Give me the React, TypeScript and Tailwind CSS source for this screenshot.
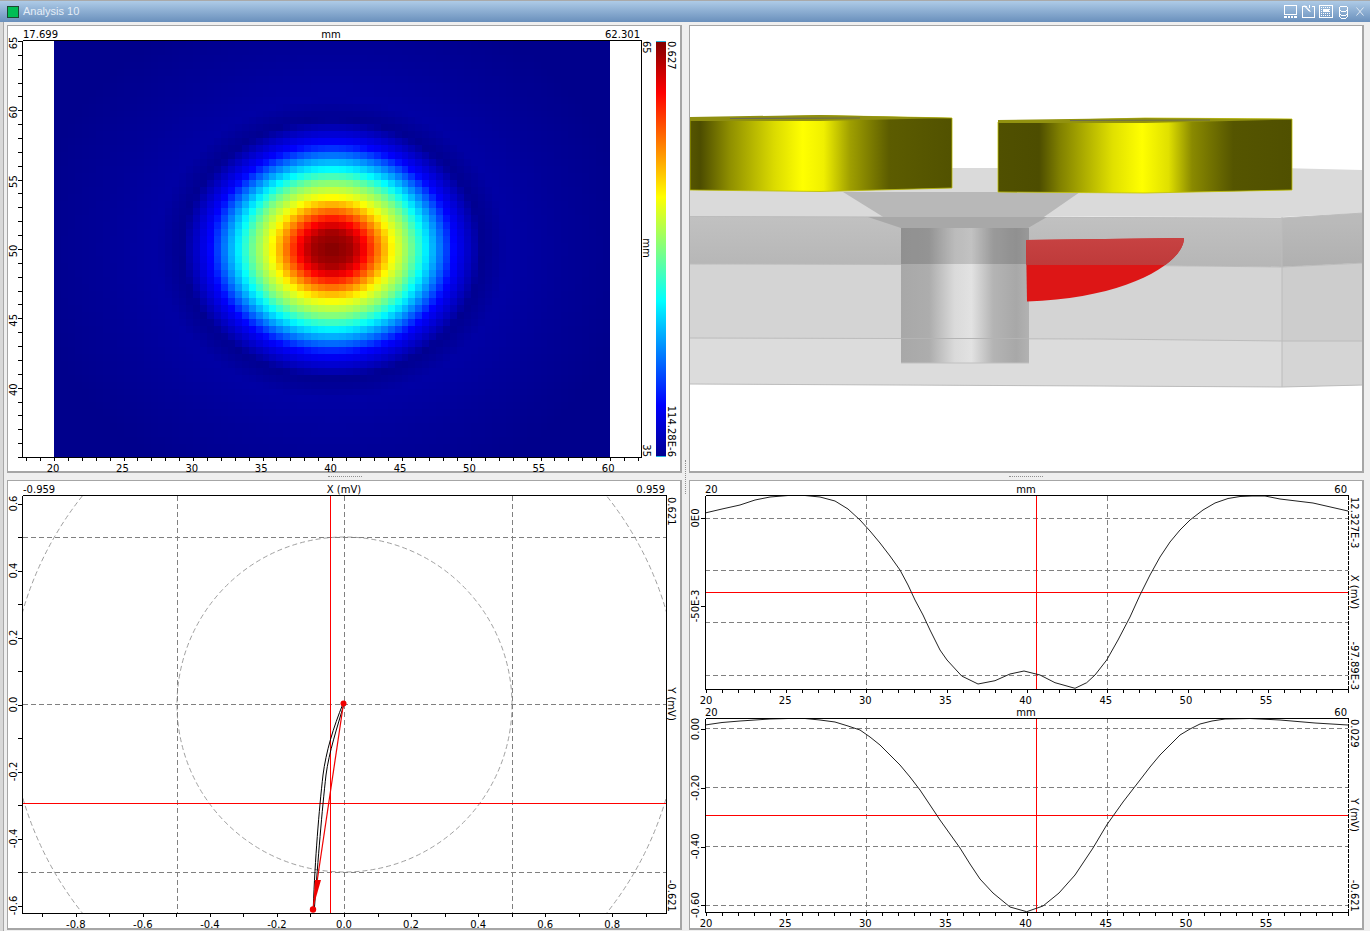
import { useMemo } from "react"

const range = (from: number, to: number, step: number) => {
  const out: number[] = []
  for (let v = from; v <= to + step / 1000; v += step) out.push(v)
  return out
}

const stops: [number, number[]][] = [
  [0, [128, 0, 0]],
  [20, [165, 0, 0]],
  [33, [255, 0, 0]],
  [60, [255, 255, 0]],
  [78, [128, 255, 128]],
  [92, [0, 255, 255]],
  [122, [0, 0, 255]],
  [150, [0, 0, 144]],
  [175, [0, 0, 165]],
  [230, [0, 0, 152]],
  [300, [0, 0, 140]],
  [1000, [0, 0, 140]],
]

function jet(d: number) {
  for (let i = 1; i < stops.length; i++) {
    if (d <= stops[i][0]) {
      const [d0, c0] = stops[i - 1]
      const [d1, c1] = stops[i]
      const t = (d - d0) / (d1 - d0)
      const c = c0.map((v, k) => Math.round(v + (c1[k] - v) * t))
      return `rgb(${c[0]},${c[1]},${c[2]})`
    }
  }
  return "rgb(0,0,140)"
}

function Heatmap() {
  const cells = useMemo(() => {
    const out: { x: number; y: number; fill: string }[] = []
    const size = 6.95
    for (let i = 0; i < 80; i++) {
      for (let j = 0; j < 60; j++) {
        const x = 54 + i * size
        const y = 41 + j * size
        const dx = x + size / 2 - 332
        const dy = (y + size / 2 - 249) * 1.16
        out.push({ x, y, fill: jet(Math.sqrt(dx * dx + dy * dy)) })
      }
    }
    return out
  }, [])
  return (
    <g shapeRendering="crispEdges">
      {cells.map((c) => (
        <rect key={`${c.x}-${c.y}`} x={c.x} y={c.y} width={7.3} height={7.3} fill={c.fill} />
      ))}
    </g>
  )
}

function Label({ x, y, children, anchor = "start" }: { x: number; y: number; children: string; anchor?: "start" | "middle" | "end" }) {
  return (
    <text x={x} y={y} textAnchor={anchor} fill="#000">
      {children}
    </text>
  )
}

// rotated axis text, dir -90 reads upwards and 90 reads downwards
function VLabel({ x, y, dir, children, anchor = "middle" }: { x: number; y: number; dir: number; children: string; anchor?: "start" | "middle" | "end" }) {
  return (
    <text transform={`translate(${x} ${y}) rotate(${dir})`} textAnchor={anchor} fill="#000">
      {children}
    </text>
  )
}

function Box({ x0, y0, x1, y1, dashedRight }: { x0: number; y0: number; x1: number; y1: number; dashedRight?: boolean }) {
  return (
    <g shapeRendering="crispEdges" stroke="#000" fill="none">
      <path d={`M${x0} ${y0}H${x1}M${x0} ${y0}V${y1}H${x1}`} />
      <path d={`M${x1} ${y0}V${y1}`} strokeDasharray={dashedRight ? "4 1" : undefined} />
    </g>
  )
}

function TicksX({ xs, y }: { xs: number[]; y: number }) {
  return <path shapeRendering="crispEdges" stroke="#000" d={xs.map((x) => `M${Math.round(x) + 0.5} ${y}v4`).join("")} />
}

function TicksY({ ys, x }: { ys: number[]; x: number }) {
  return <path shapeRendering="crispEdges" stroke="#000" d={ys.map((y) => `M${x} ${Math.round(y) + 0.5}h-4`).join("")} />
}

function Dashed({ d }: { d: string }) {
  return <path shapeRendering="crispEdges" d={d} stroke="#808080" strokeDasharray="5 3" fill="none" />
}

function Cross({ x0, y0, x1, y1, cx, cy }: { x0: number; y0: number; x1: number; y1: number; cx: number; cy: number }) {
  return <path shapeRendering="crispEdges" d={`M${cx} ${y0}V${y1}M${x0} ${cy}H${x1}`} stroke="#ff0000" fill="none" />
}

function MapPanel() {
  const xMinor = range(18, 62, 1).map((v) => 54 + (v - 20) * 13.9)
  const yMinor = range(35, 65, 1).map((v) => 457 - (v - 35) * 13.87)
  return (
    <svg viewBox="8 26 672 445" className="block h-full w-full overflow-visible">
      <Heatmap />
      <defs>
        <linearGradient id="jetbar" x1="0" y1="0" x2="0" y2="1">
          <stop offset="0" stopColor="#800000" />
          <stop offset="0.125" stopColor="#ff0000" />
          <stop offset="0.375" stopColor="#ffff00" />
          <stop offset="0.5" stopColor="#80ff80" />
          <stop offset="0.625" stopColor="#00ffff" />
          <stop offset="0.875" stopColor="#0000ff" />
          <stop offset="1" stopColor="#000090" />
        </linearGradient>
      </defs>
      <rect x="656" y="41" width="10" height="416" fill="url(#jetbar)" />
      <path shapeRendering="crispEdges" d="M656 41.5h10M656 456.5h10" stroke="#29b6e0" />
      <Box x0={22.5} y0={40.5} x1={641.5} y1={457.5} />
      <TicksX xs={xMinor} y={457} />
      <TicksY ys={yMinor} x={22} />
      <Label x={23} y={38}>17.699</Label>
      <Label x={331} y={38} anchor="middle">mm</Label>
      <Label x={640} y={38} anchor="end">62.301</Label>
      {[20, 25, 30, 35, 40, 45, 50, 55, 60].map((v) => (
        <Label key={v} x={54 + (v - 20) * 13.88 - 1} y={471.5} anchor="middle">{String(v)}</Label>
      ))}
      {[65, 60, 55, 50, 45, 40].map((v) => (
        <VLabel key={v} x={17} y={457 - (v - 35) * 13.87 + 2} dir={-90}>{String(v)}</VLabel>
      ))}
      <VLabel x={643} y={41} dir={90} anchor="start">65</VLabel>
      <VLabel x={643} y={248} dir={90}>mm</VLabel>
      <VLabel x={643} y={457} dir={90} anchor="end">35</VLabel>
      <VLabel x={668} y={41} dir={90} anchor="start">0.627</VLabel>
      <VLabel x={668} y={457} dir={90} anchor="end">114.28E-6</VLabel>
    </svg>
  )
}

function ScenePanel() {
  return (
    <svg viewBox="690 26 672 445" className="block h-full w-full">
      <defs>
        <linearGradient id="magnetL" gradientUnits="userSpaceOnUse" x1="690" y1="0" x2="952" y2="0">
          <stop offset="0" stopColor="#565600" />
          <stop offset="0.04" stopColor="#4d4d00" />
          <stop offset="0.15" stopColor="#8e8e00" />
          <stop offset="0.32" stopColor="#dada00" />
          <stop offset="0.43" stopColor="#ffff00" />
          <stop offset="0.51" stopColor="#f0f000" />
          <stop offset="0.61" stopColor="#a0a000" />
          <stop offset="0.76" stopColor="#5c5c00" />
          <stop offset="1" stopColor="#525200" />
        </linearGradient>
        <linearGradient id="magnetR" gradientUnits="userSpaceOnUse" x1="998" y1="0" x2="1292" y2="0">
          <stop offset="0" stopColor="#505000" />
          <stop offset="0.14" stopColor="#4d4d00" />
          <stop offset="0.21" stopColor="#808000" />
          <stop offset="0.39" stopColor="#e0e000" />
          <stop offset="0.49" stopColor="#ffff00" />
          <stop offset="0.58" stopColor="#e0e000" />
          <stop offset="0.66" stopColor="#8a8a00" />
          <stop offset="0.8" stopColor="#555500" />
          <stop offset="1" stopColor="#505000" />
        </linearGradient>
        <linearGradient id="pin" gradientUnits="userSpaceOnUse" x1="901" y1="0" x2="1029" y2="0">
          <stop offset="0" stopColor="#a8a8a8" />
          <stop offset="0.22" stopColor="#adadad" />
          <stop offset="0.42" stopColor="#dadada" />
          <stop offset="0.55" stopColor="#e2e2e2" />
          <stop offset="0.72" stopColor="#b4b4b4" />
          <stop offset="0.9" stopColor="#a8a8a8" />
          <stop offset="1" stopColor="#b2b2b2" />
        </linearGradient>
        <linearGradient id="band" x1="0" y1="0" x2="0" y2="1">
          <stop offset="0" stopColor="#c2c2c2" />
          <stop offset="1" stopColor="#b6b6b6" />
        </linearGradient>
        <linearGradient id="redTop" x1="0" y1="0" x2="0" y2="1">
          <stop offset="0" stopColor="#c74242" />
          <stop offset="1" stopColor="#b33030" />
        </linearGradient>
        <clipPath id="bandClip">
          <rect x="1000" y="230" width="220" height="35" />
        </clipPath>
      </defs>

      {/* plate */}
      <path d="M690 190H843L952 168H1280L1364 170V213L1282 217L690 216Z" fill="#dadada" />
      <path d="M690 216L1100 217L1282 218L1364 213V263L1282 267L1100 265L690 264Z" fill="url(#band)" />
      <path d="M690 264L1100 265L1282 267L1364 263V385L1282 387L1100 386L690 384Z" fill="#d4d4d4" />
      <path d="M690 338L1100 339L1282 341L1364 341V385L1282 387L1100 386L690 384Z" fill="#dcdcdc" />
      <path d="M1282 217L1364 213V385L1282 387Z" fill="#000" fillOpacity="0.03" />
      <path d="M690 216.5L1282 218L1364 213M690 264L1100 265L1282 267L1364 263M690 338L1100 339L1282 341L1364 341M690 384L1100 386L1282 387L1364 385M1282 217V387" stroke="#bcbcbc" fill="none" />

      {/* countersink + pin */}
      <path d="M843 192H1080L1028 228H901Z" fill="#b8b8b8" />
      <path d="M868 217H1047L1028 228H901Z" fill="#a8a8a8" />
      <rect x="901" y="228" width="128" height="135" fill="url(#pin)" />
      <rect x="901" y="228" width="128" height="36" fill="#000" fillOpacity="0.14" />
      <path d="M901 338.5H1029" stroke="#b4b4b4" />
      <path d="M901 363H1029" stroke="#c0c0c0" />

      {/* red patch */}
      <path d="M1026 240L1184 238C1184 262 1130 298 1027 301.5Z" fill="#dd1616" />
      <path d="M1026 240L1184 238C1184 262 1130 298 1027 301.5Z" fill="url(#redTop)" clipPath="url(#bandClip)" />

      {/* magnets */}
      <path d="M690 119L820 115.5L952 118V188L820 191.5L690 190Z" fill="url(#magnetL)" stroke="#b9b900" strokeWidth="0.8" />
      <path d="M690 117L820 115L952 118L820 121L690 121Z" fill="#8f8f10" />
      <path d="M730 118.5L860 118" stroke="#6b6b50" strokeWidth="1.2" />
      <path d="M998 122L1145 118L1292 119V190L1145 193L998 192Z" fill="url(#magnetR)" stroke="#c2c200" strokeWidth="0.8" />
      <path d="M998 120L1145 118L1292 119.5L1145 123L998 123Z" fill="#92920f" />
      <path d="M1070 120.5L1210 120" stroke="#6b6b50" strokeWidth="1.2" />
    </svg>
  )
}

function PolarPanel() {
  const xTicks = range(-0.9, 0.9, 0.1).map((v) => 344 + v * 335.2)
  const yTicks = range(-0.6, 0.6, 0.1).map((v) => 704.5 - v * 335)
  return (
    <svg viewBox="8 481 672 447" className="block h-full w-full overflow-visible">
      <defs>
        <clipPath id="polarClip">
          <rect x="23" y="496" width="643" height="417" />
        </clipPath>
      </defs>
      <g clipPath="url(#polarClip)" fill="none" stroke="#a0a0a0" strokeDasharray="5 3">
        <circle cx="344.5" cy="704.5" r="167.5" />
        <circle cx="344.5" cy="704.5" r="335" />
      </g>
      <Dashed d="M177.5 496V913M344.5 496V913M512.5 496V913M23 537.5H666M23 704.5H666M23 872.5H666" />
      <Cross x0={23} y0={496} x1={666} y1={913} cx={330.5} cy={803.5} />
      <path d="M343.3 703C333 728 326 752 323 775C319 810 315 860 313.3 907" fill="none" stroke="#000" />
      <path d="M344 704C337 728 329 752 326 775C322 810 318 860 314.5 907" fill="none" stroke="#000" />
      <path d="M343.5 703.5L313 909" stroke="#f00000" strokeWidth="1.2" />
      <path d="M315 880L321 880L313 908Z" fill="#f00000" />
      <circle cx="343.5" cy="703.5" r="3" fill="#f00000" />
      <circle cx="313" cy="909.5" r="3.2" fill="#f00000" />
      <Box x0={22.5} y0={495.5} x1={666.5} y1={913.5} />
      <TicksX xs={xTicks} y={913} />
      <TicksY ys={yTicks} x={22} />
      <Label x={23} y={493}>-0.959</Label>
      <Label x={344} y={493} anchor="middle">X (mV)</Label>
      <Label x={665} y={493} anchor="end">0.959</Label>
      {[-0.8, -0.6, -0.4, -0.2, 0, 0.2, 0.4, 0.6, 0.8].map((v) => (
        <Label key={v} x={344 + v * 335.2} y={928} anchor="middle">{v.toFixed(1)}</Label>
      ))}
      {[0.6, 0.4, 0.2, 0, -0.2, -0.4, -0.6].map((v) => (
        <VLabel key={v} x={17} y={704.5 - v * 335} dir={-90}>{v.toFixed(1)}</VLabel>
      ))}
      <VLabel x={668} y={497} dir={90} anchor="start">0.621</VLabel>
      <VLabel x={668} y={704} dir={90}>Y (mV)</VLabel>
      <VLabel x={668} y={912} dir={90} anchor="end">-0.621</VLabel>
    </svg>
  )
}

const curveX =
  "M705 513L722 509L740 505L755 500L770 497L788 495.5L805 495.5L820 497L835 501L848 509L860 520L870 531L880 543L890 556L900 570L908 585L915 600L923 615L930 630L940 650L947 660L961.7 676L978 684L995 680.7L1010 674L1024 671L1040 675L1055 682.7L1075 688.3L1086.7 682.7L1095 675L1106.7 660L1118 640L1130 617L1140 595L1150 575L1160 557L1170 542L1180 530L1190 520L1203 510L1215 503L1228 498.5L1240 496.5L1252 496L1265 496L1280 499L1313 503L1348 511"

const curveY =
  "M705 725L722 722.5L740 721L755 720L770 719L788 718.5L805 718.5L820 720L835 722L848 726L860 730L870 737L880 745L890 755L900 765L910 777L920 790L930 805L940 820L950 834L960 848L970 864L980 879L993 893L1010 907L1026.7 911.7L1043 906L1059 893L1075 875L1093 848L1106.7 825L1123 802L1140 780L1150 767L1160 755L1170 745L1180 735L1190 729L1200 724L1212 721L1225 719L1250 718.5L1280 720L1315 723L1348 725"

function SignalPanel() {
  const xTicks = range(20, 60, 1).map((v) => 705.5 + (v - 20) * 16.07)
  const tickLabels = [20, 25, 30, 35, 40, 45, 50, 55]
  return (
    <svg viewBox="690 481 672 447" className="block h-full w-full overflow-visible">
      {/* X channel */}
      <Dashed d="M866.5 496V690M1107.5 496V690M705 518.5H1348M705 570.5H1348M705 622.5H1348M705 675.5H1348" />
      <Cross x0={705} y0={496} x1={1348} y1={690} cx={1036.5} cy={592.5} />
      <path d={curveX} fill="none" stroke="#222" />
      <Box x0={705.5} y0={495.5} x1={1348.5} y1={689.5} dashedRight />
      <TicksX xs={xTicks} y={689} />
      <TicksY ys={[518, 606]} x={705} />
      <Label x={705} y={493}>20</Label>
      <Label x={1026} y={493} anchor="middle">mm</Label>
      <Label x={1347} y={493} anchor="end">60</Label>
      {tickLabels.map((v) => (
        <Label key={v} x={v === 20 ? 706 : 705 + (v - 20) * 16.03} y={704} anchor="middle">{String(v)}</Label>
      ))}
      <VLabel x={699} y={518} dir={-90}>0E0</VLabel>
      <VLabel x={699} y={606} dir={-90}>-50E-3</VLabel>
      <VLabel x={1351} y={497} dir={90} anchor="start">12.327E-3</VLabel>
      <VLabel x={1351} y={592} dir={90}>X (mV)</VLabel>
      <VLabel x={1351} y={690} dir={90} anchor="end">-97.89E-3</VLabel>

      {/* Y channel */}
      <Dashed d="M866.5 718V912M1107.5 718V912M705 728.5H1348M705 787.5H1348M705 846.5H1348M705 905.5H1348" />
      <Cross x0={705} y0={718} x1={1348} y1={912} cx={1036.5} cy={815.5} />
      <path d={curveY} fill="none" stroke="#222" />
      <Box x0={705.5} y0={718.5} x1={1348.5} y1={912.5} dashedRight />
      <TicksX xs={xTicks} y={912} />
      <TicksY ys={[729, 788, 847, 905]} x={705} />
      <Label x={705} y={716}>20</Label>
      <Label x={1026} y={716} anchor="middle">mm</Label>
      <Label x={1347} y={716} anchor="end">60</Label>
      {tickLabels.map((v) => (
        <Label key={v} x={v === 20 ? 706 : 705 + (v - 20) * 16.03} y={927} anchor="middle">{String(v)}</Label>
      ))}
      {[[0, "0.00"], [1, "-0.20"], [2, "-0.40"], [3, "-0.60"]].map(([i, t]) => (
        <VLabel key={t} x={699} y={729 + Number(i) * 58.7} dir={-90}>{String(t)}</VLabel>
      ))}
      <VLabel x={1351} y={719} dir={90} anchor="start">0.029</VLabel>
      <VLabel x={1351} y={815} dir={90}>Y (mV)</VLabel>
      <VLabel x={1351} y={912} dir={90} anchor="end">-0.621</VLabel>
    </svg>
  )
}

function TitleIcons() {
  return (
    <svg width="80" height="14" viewBox="0 0 80 14" shapeRendering="crispEdges" fill="none" stroke="#fff" className="mt-[1px] block">
      <path d="M0.5 0.5H12.5V9.5H0.5Z" />
      <path d="M0 11.5H13M0 12.5H13" />
      <path d="M3.5 11V13M6.5 11V13M9.5 11V13" stroke="#6f95bf" />
      <path d="M22.5 1.5H18.5V12.5H30.5V1.5H27.5" />
      <path d="M20 0.5L25.5 6.5M21 0.5L26.5 6.5M25.5 0V3" shapeRendering="auto" />
      <path d="M35.5 0.5H48.5V12.5H35.5Z" />
      <path d="M37 2.5H47M37 4.5H47M37 6.5H47M37 8.5H47M37 10.5H47" strokeDasharray="1 1" />
      <path d="M39 4H45V7H39Z" fill="#fff" stroke="none" />
      <path d="M55.5 2.5V11.5L57 13H62L63.5 11.5V2.5L62 1H57ZM55.5 4.5L57 6H62L63.5 4.5M55.5 8.5L57 10H62L63.5 8.5" />
      <path d="M72.5 2.5L79.5 10.5M79.5 2.5L72.5 10.5" stroke="#dfe8f2" shapeRendering="auto" />
    </svg>
  )
}

export default function App() {
  return (
    <div className="relative flex h-screen w-screen flex-col overflow-hidden bg-[#d8d8d8] font-['DejaVu_Sans',sans-serif] text-[10px]">
      <div className="flex h-[22px] shrink-0 items-center justify-between border-t border-[#a9a9a9] bg-gradient-to-b from-[#aecbe7] to-[#6a90bc] pl-[7px] pr-[6px]">
        <div className="flex items-center gap-[4px]">
          <div className="h-[12px] w-[12px] border border-[#1a4a30] bg-[#00bd55]" />
          <span className="font-['Liberation_Sans',sans-serif] text-[11px] text-[#e4edf7]">Analysis 10</span>
        </div>
        <TitleIcons />
      </div>
      <div className="ml-[3px] grid flex-1 grid-cols-[675px_675px] grid-rows-[448px_450px] gap-[7px] border-l border-[#a8a8a8] bg-[#efefef] pl-[3px] pt-[3px]">
        <div className="border border-r-2 border-b-2 border-[#a6a6a6] bg-white">
          <MapPanel />
        </div>
        <div className="border border-r-2 border-b-2 border-[#a6a6a6] bg-white">
          <ScenePanel />
        </div>
        <div className="border border-r-2 border-b-2 border-[#a6a6a6] bg-white">
          <PolarPanel />
        </div>
        <div className="border border-r-2 border-b-2 border-[#a6a6a6] bg-white">
          <SignalPanel />
        </div>
      </div>
      {/* splitter grips */}
      <div className="absolute left-[328px] top-[476px] w-[34px] border-t border-dotted border-[#8f8f8f]" />
      <div className="absolute left-[1009px] top-[476px] w-[34px] border-t border-dotted border-[#8f8f8f]" />
      <div className="absolute left-[685px] top-[460px] h-[34px] border-l border-dotted border-[#8f8f8f]" />
    </div>
  )
}
